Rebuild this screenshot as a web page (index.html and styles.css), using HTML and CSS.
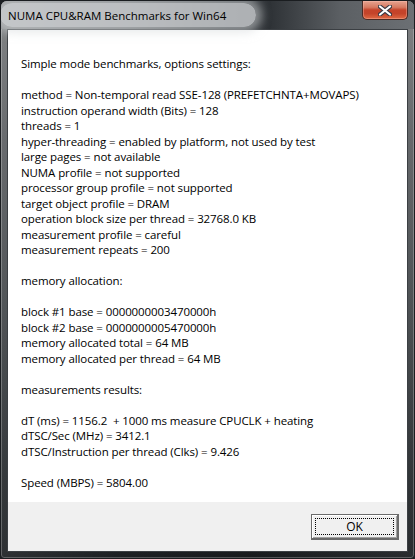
FILE: index.html
```html
<!DOCTYPE html>
<html>
<head>
<meta charset="utf-8">
<title>NUMA CPU&amp;RAM Benchmarks for Win64</title>
<link rel="stylesheet" href="styles.css">
</head>
<body>
<div class="window">
  <div class="titlebar">
    <div class="title"><span class="title-glow"></span><span class="title-text">NUMA CPU&amp;RAM Benchmarks for Win64</span></div>
    <div class="close-btn">
      <svg width="14" height="11" viewBox="0 0 14 11">
        <path d="M2 1.5 L12 9.5 M12 1.5 L2 9.5" stroke="#3a3a44" stroke-width="4.2" stroke-linecap="round" fill="none"/>
        <path d="M2 1.5 L12 9.5 M12 1.5 L2 9.5" stroke="#ffffff" stroke-width="2.2" stroke-linecap="round" fill="none"/>
      </svg>
    </div>
  </div>
  <div class="client">
    <pre class="report">Simple mode benchmarks, options settings:

method = Non-temporal read SSE-128 (PREFETCHNTA+MOVAPS)
instruction operand width (Bits) = 128
threads = 1
hyper-threading = enabled by platform, not used by test
large pages = not available
NUMA profile = not supported
processor group profile = not supported
target object profile = DRAM
operation block size per thread = 32768.0 KB
measurement profile = careful
measurement repeats = 200

memory allocation:

block #1 base = 0000000003470000h
block #2 base = 0000000005470000h
memory allocated total = 64 MB
memory allocated per thread = 64 MB

measurements results:

dT (ms) = 1156.2  + 1000 ms measure CPUCLK + heating
dTSC/Sec (MHz) = 3412.1
dTSC/Instruction per thread (Clks) = 9.426

Speed (MBPS) = 5804.00</pre>
    <div class="footer">
      <button class="ok-btn"><span class="focus">OK</span></button>
    </div>
  </div>
</div>
</body>
</html>
```

FILE: styles.css
```css
html, body {
  margin: 0;
  padding: 0;
  background: #1c1f22;
}

.window {
  width: 415px;
  height: 559px;
  box-sizing: border-box;
  border: 1px solid #1a1d20;
  border-radius: 7px 7px 4px 4px;
  padding: 0 6px 6px 6px;
  display: flex;
  flex-direction: column;
  background:
    linear-gradient(to right, rgba(255,255,255,0.08), rgba(255,255,255,0) 30%, rgba(0,0,0,0.15) 60%, rgba(255,255,255,0.06)),
    linear-gradient(to bottom, #7a7c7e 0%, #5c5f62 25%, #43474a 55%, #25292c 85%, #1c1f22 100%);
  box-shadow: inset 0 0 0 1px rgba(255,255,255,0.25);
  overflow: hidden;
}

.titlebar {
  height: 28px;
  display: flex;
  justify-content: space-between;
  align-items: flex-start;
  margin: 0 -6px;
  padding: 0 6px 0 7px;
  background: linear-gradient(to right, #8a8c8e 0%, #6a6d70 30%, #3a3e42 55%, #2e3236 65%, #5b5f63 82%, #6c7074 100%);
}

.title {
  position: relative;
  height: 28px;
  display: flex;
  align-items: center;
}

.title-glow {
  position: absolute;
  left: -8px;
  right: -30px;
  top: 2px;
  bottom: 2px;
  border-radius: 14px;
  background: rgba(215, 218, 220, 0.75);
  box-shadow: 0 0 10px 6px rgba(215, 218, 220, 0.55);
}

.title-text {
  position: relative;
  font-family: "Open Sans", "Noto Sans", sans-serif;
  font-size: 11.5px;
  color: #000;
  padding-top: 1px;
}

.close-btn {
  width: 46px;
  height: 19px;
  box-sizing: border-box;
  border: 1px solid #4a2a24;
  border-top: 0;
  border-radius: 0 0 5px 5px;
  background: linear-gradient(to bottom, #e7a390 0%, #d67a62 35%, #c5432a 50%, #c4442a 70%, #e06a44 100%);
  box-shadow: inset 0 0 0 1px rgba(255,200,190,0.35);
  display: flex;
  align-items: center;
  justify-content: center;
}

.client {
  flex: 1;
  display: flex;
  flex-direction: column;
  border: 1px solid #3b3f43;
  background: #f0f0f0;
}

.report {
  margin: 0;
  height: 472px;
  box-sizing: border-box;
  background: #ffffff;
  padding: 26px 0 0 13px;
  font-family: "Open Sans", "Noto Sans", sans-serif;
  font-size: 11.5px;
  letter-spacing: -0.1px;
  line-height: 15.5px;
  color: #000;
  white-space: pre;
}

.footer {
  flex: 1;
  display: flex;
  justify-content: flex-end;
  align-items: flex-start;
  padding: 12px 8px 0 0;
  background: #f0f0f0;
}

.ok-btn {
  width: 88px;
  height: 26px;
  box-sizing: border-box;
  padding: 3px;
  margin: 0;
  background: #f0f0f0;
  border: 1px solid #6a6a6a;
  border-right-width: 2px;
  border-bottom-width: 2px;
  box-shadow: inset 1px 1px 0 #ffffff, inset -1px -1px 0 #a0a0a0;
  display: flex;
}

.focus {
  flex: 1;
  border: 1px dotted #000;
  display: flex;
  align-items: center;
  justify-content: center;
  font-family: "Open Sans", "Noto Sans", sans-serif;
  font-size: 12px;
  color: #000;
  line-height: 1;
}
```
